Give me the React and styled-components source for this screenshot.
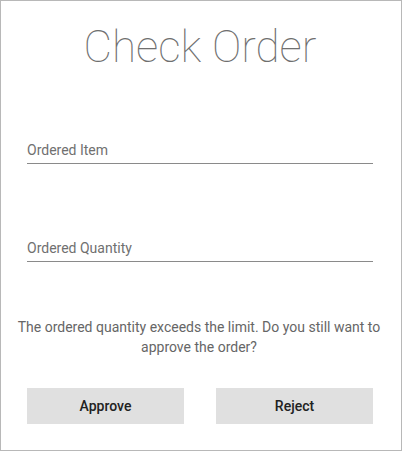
import React from "react";
import styled, { createGlobalStyle } from "styled-components";

const GlobalStyle = createGlobalStyle`
  body {
    margin: 0;
    font-family: Roboto, "Liberation Sans", sans-serif;
    background: #fff;
  }
`;

const Dialog = styled.div`
  box-sizing: border-box;
  width: 402px;
  height: 451px;
  border: 1px solid #b8b8b8;
  padding: 0 28px 0 26px;
  display: flex;
  flex-direction: column;
`;

const Title = styled.h1`
  margin: 20px 0 0;
  font-size: 44px;
  font-weight: 100;
  line-height: 52px;
  color: #6f6f6f;
  text-align: center;
`;

const Field = styled.div`
  margin-top: ${p => p.top}px;
  border-bottom: 1px solid #8a8a8a;
  padding-bottom: 5px;
  font-size: 14px;
  line-height: 16px;
  color: #707070;
`;

const Message = styled.p`
  margin: 55px -16px 0 -18px;
  font-size: 14px;
  line-height: 20px;
  color: #666;
  text-align: center;
`;

const Actions = styled.div`
  margin-top: 31px;
  display: flex;
  justify-content: space-between;
`;

const Button = styled.button`
  width: 157px;
  height: 36px;
  border: none;
  background: #e0e0e0;
  font-family: inherit;
  font-size: 14px;
  font-weight: 500;
  color: #222;
  padding: 0;
`;

export default function App() {
  return (
    <>
      <GlobalStyle />
      <Dialog>
        <Title>Check Order</Title>
        <Field top={69}>Ordered Item</Field>
        <Field top={76}>Ordered Quantity</Field>
        <Message>
          The ordered quantity exceeds the limit. Do you still want to approve the order?
        </Message>
        <Actions>
          <Button>Approve</Button>
          <Button>Reject</Button>
        </Actions>
      </Dialog>
    </>
  );
}
